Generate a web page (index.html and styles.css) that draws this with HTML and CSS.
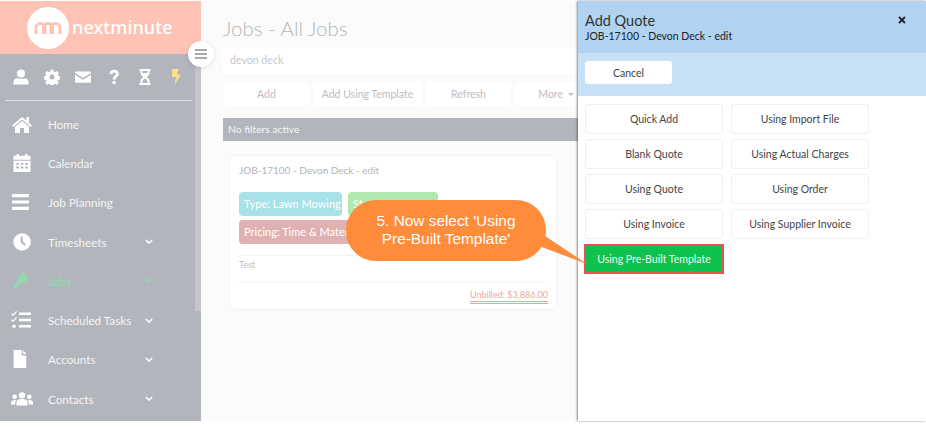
FILE: index.html
```html
<!DOCTYPE html>
<html lang="en">
<head>
<meta charset="utf-8">
<title>Jobs - All Jobs</title>
<link rel="stylesheet" href="styles.css">
</head>
<body>
<div class="app">
  <aside class="sidebar">
    <div class="brand">
      <div class="logo-circle">
        <svg width="28" height="14" viewBox="0 0 28 14"><path d="M2 13V7a4.500 4.500 0 0 1 9 0v6M9.500 13V7a4.500 4.500 0 0 1 9 0v6M17 13V7a4.500 4.500 0 0 1 9 0v6" fill="none" stroke="#fec3b5" stroke-width="3"/></svg>
      </div>
      <span class="brand-name">nextminute</span>
    </div>
    <div class="side-body">
      <div class="side-inner">
        <div class="quick-icons">
          <svg class="qi" viewBox="0 0 16 16"><circle cx="8" cy="4.500" r="4"/><path d="M0.500 15.500v-2.500c0-2.500 2-3.500 4-3.800 1 .8 6 .8 7 0 2 .3 4 1.300 4 3.800v2.500z"/></svg>
          <svg class="qi" viewBox="0 0 16 16"><path fill-rule="evenodd" d="M6.500 1h3l.4 2 1.200.5 1.700-1.100 2.100 2.100-1.100 1.700.5 1.200 2 .4v3l-2 .4-.5 1.200 1.100 1.700-2.100 2.100-1.700-1.100-1.200.5-.4 2h-3l-.4-2-1.200-.5-1.700 1.100-2.100-2.100 1.100-1.700-.5-1.200-2-.4v-3l2-.4.500-1.200-1.100-1.700 2.100-2.100 1.700 1.100 1.200-.5zM8 5.800a2.500 2.500 0 1 0 0 5 2.500 2.500 0 0 0 0-5z" transform="translate(0 -.3)"/></svg>
          <svg class="qi" viewBox="0 0 16 16"><path d="M0 3.500q0-1 1-1h14q1 0 1 1v.5l-8 5-8-5zM0 5.700l8 5 8-5v7q0 1-1 1H1q-1 0-1-1z"/></svg>
          <svg class="qi" viewBox="0 0 16 16"><path d="M3.500 5C3.800 2 5.700.800 8.200.800c2.700 0 4.600 1.600 4.600 4 0 3.200-3.200 3.200-3.200 5.700H6.700c0-3.700 3-3.700 3-5.600 0-1-.7-1.500-1.600-1.500-1 0-1.600.6-1.800 1.900zM6.600 12h3v3h-3z"/></svg>
          <svg class="qi" viewBox="0 0 16 16"><path fill-rule="evenodd" d="M2.500 0h11v2h-1v2.500C12.500 6.500 10 7 10 8s2.500 1.500 2.500 3.500V14h1v2h-11v-2h1v-2.500C3.500 9.500 6 9 6 8S3.500 6.500 3.500 4.500V2h-1zM5.500 2v2h5V2zM8 9.500c-.8.800-2.500 1.700-2.500 3V14h5v-1.500c0-1.300-1.700-2.200-2.500-3z"/></svg>
          <svg class="qi bolt" viewBox="0 0 16 16"><path d="M4 0h6.500L9 5.500h4L6.500 16 8 8H4z"/></svg>
        </div>
        <div class="side-rule"></div>
        <nav class="nav">
          <a class="nav-item"><svg class="ni" viewBox="0 0 22 18"><path d="M11 2 1 10.500l1.300 1.400L11 4.600l8.700 7.300 1.300-1.400-3-2.500V2h-2.500v3.800z"/><path d="M11 6 4 11.800V18h5v-5h4v5h5v-6.200z"/></svg><span>Home</span></a>
          <a class="nav-item"><svg class="ni" viewBox="0 0 22 20"><path fill-rule="evenodd" d="M5 0h2.500v2h7V0H17v2h2.500q1 0 1 1v3.500h-19V3q0-1 1-1H5zM1.500 7.500h19V19q0 1-1 1h-17q-1 0-1-1zM4.500 10v2h3v-2zm5 0v2h3v-2zm5 0v2h3v-2zm-10 4v2h3v-2zm5 0v2h3v-2zm5 0v2h3v-2z"/></svg><span>Calendar</span></a>
          <a class="nav-item"><svg class="ni" viewBox="0 0 22 18"><path d="M1 1h17v3.200H1zM1 7.400h17v3.200H1zM1 13.800h17V17H1z"/></svg><span>Job Planning</span></a>
          <a class="nav-item has-sub"><svg class="ni" viewBox="0 0 22 20"><path fill-rule="evenodd" d="M11 1.500a8.500 8.500 0 1 1 0 17 8.500 8.500 0 0 1 0-17zM9.800 5v5.700l3.800 3 1.200-1.500-3-2.300V5z" transform="translate(-1.500 -1.500) scale(1.140)"/></svg><span>Timesheets</span><svg class="chev" viewBox="0 0 10 6"><path d="M1 1l4 4 4-4"/></svg></a>
          <a class="nav-item has-sub active"><svg class="ni" viewBox="0 0 22 20"><path d="M1 16.500 8 9.500 6.500 6 12 .5 18.500 7 13 12.500 10.500 11.500 3.500 18.500z"/></svg><span>Jobs</span><svg class="chev" viewBox="0 0 10 6"><path d="M1 1l4 4 4-4"/></svg></a>
          <a class="nav-item has-sub"><svg class="ni" viewBox="0 0 22 18"><path d="M8 1.500h12v2.400H8zM8 7.800h12v2.400H8zM8 14h12v2.400H8zM1 2.200l1.300 1.200L5 0l1 .8L2.400 5 0 3.200zM1 8.200l1.300 1.200L5 6l1 .8L2.400 11 0 9.200z"/><circle cx="3" cy="15.200" r="1.800"/></svg><span>Scheduled Tasks</span><svg class="chev" viewBox="0 0 10 6"><path d="M1 1l4 4 4-4"/></svg></a>
          <a class="nav-item has-sub"><svg class="ni" viewBox="0 0 22 20"><path d="M3 0h9v6h5v13.300q0 .7-.7.700H3.700q-.7 0-.7-.7zM13.500 0 17 4.500h-3.500z" transform="translate(-1.300 0)"/></svg><span>Accounts</span><svg class="chev" viewBox="0 0 10 6"><path d="M1 1l4 4 4-4"/></svg></a>
          <a class="nav-item has-sub"><svg class="ni wide" viewBox="0 0 24 16"><circle cx="12" cy="4" r="3.500"/><circle cx="4" cy="5.500" r="2.500"/><circle cx="20" cy="5.500" r="2.500"/><path d="M6 15v-3c0-3 2.500-4 6-4s6 1 6 4v3zM0 14v-2c0-2 1.500-3 4-3 .8 0 1.300.1 1.700.3C5 10 4.500 11 4.500 12v2zM24 14v-2c0-2-1.500-3-4-3-.8 0-1.300.1-1.700.3.700.7 1.200 1.700 1.200 2.700v2z"/></svg><span>Contacts</span><svg class="chev" viewBox="0 0 10 6"><path d="M1 1l4 4 4-4"/></svg></a>
        </nav>
      </div>
      <div class="side-track"><div class="side-thumb"></div></div>
    </div>
    <button class="collapse"><svg width="12" height="10" viewBox="0 0 12 10"><path d="M0 0h12v2H0zM0 4h12v2H0zM0 8h12v2H0z" fill="#a9a9a9"/></svg></button>
  </aside>

  <main class="main">
    <h1 class="page-title">Jobs - All Jobs</h1>
    <div class="search">devon deck</div>
    <div class="actions">
      <div class="act act-add">Add</div>
      <div class="act act-tpl">Add Using Template</div>
      <div class="act act-ref">Refresh</div>
      <div class="act act-more">More <i class="caret"></i></div>
    </div>
    <div class="filters">No filters active</div>
    <article class="card">
      <div class="card-title">JOB-17100 - Devon Deck - edit</div>
      <div class="tags">
        <span class="tag tag-type">Type: Lawn Mowing</span>
        <span class="tag tag-status">Status: In Progress</span>
        <span class="tag tag-pricing">Pricing: Time &amp; Materials</span>
      </div>
      <div class="card-note">Test</div>
      <div class="card-foot"><span class="unbilled">Unbilled: $3,886.00</span></div>
    </article>
  </main>

  <section class="drawer">
    <header class="drawer-head">
      <div>
        <div class="drawer-title">Add Quote</div>
        <div class="drawer-sub">JOB-17100 - Devon Deck - edit</div>
      </div>
      <svg class="close" width="8" height="8" viewBox="0 0 8 8"><path d="M1 1l6 6M7 1L1 7" stroke="#222" stroke-width="1.800"/></svg>
    </header>
    <div class="drawer-tools"><button class="cancel">Cancel</button></div>
    <div class="options">
      <button class="opt">Quick Add</button>
      <button class="opt">Using Import File</button>
      <button class="opt">Blank Quote</button>
      <button class="opt">Using Actual Charges</button>
      <button class="opt">Using Quote</button>
      <button class="opt">Using Order</button>
      <button class="opt">Using Invoice</button>
      <button class="opt">Using Supplier Invoice</button>
      <button class="opt opt-go">Using Pre-Built Template</button>
    </div>
  </section>

  <div class="callout">
    <svg class="callout-tail" width="60" height="50" viewBox="0 0 60 50"><path d="M0 11 48 43 0 25z" fill="#ff8c3a" transform="translate(0 -1)"/></svg>
    <div class="callout-text">5. Now select 'Using<br>Pre-Built Template'</div>
  </div>
</div>
</body>
</html>
```
FILE: styles.css
```css
* { box-sizing: border-box; }
html, body { margin: 0; height: 100%; background: #fff; overflow: hidden; }
body { padding-top: 1px; font-family: Lato, "Open Sans", sans-serif; }
.app { position: relative; display: flex; height: 420px; background: #fbfbfb; }

.sidebar { position: relative; flex: 0 0 201px; display: flex; flex-direction: column; background: #b2b6bc; }
.brand { flex: 0 0 53px; display: flex; align-items: center; padding-left: 27px; gap: 3px; background: #fec3b5; }
.logo-circle { width: 42px; height: 42px; border-radius: 50%; background: #fff; display: flex; align-items: center; justify-content: center; }
.brand-name { color: #fff; font: 500 18px "Noto Sans", sans-serif; letter-spacing: .1px; margin-top: -2px; }
.side-body { flex: 1; display: flex; min-height: 0; }
.side-inner { flex: 1; min-width: 0; }
.side-track { flex: 0 0 6px; }
.side-thumb { height: 257px; background: #c5c6c8; }
.quick-icons { display: flex; justify-content: space-between; align-items: center; height: 46px; padding: 0 11px 0 13px; }
.qi { width: 16px; height: 16px; fill: #fff; }
.bolt { fill: #fbe08c; }
.side-rule { height: 1px; margin: 0 0 0 5px; width: 187px; background: #dcdee0; }
.nav { padding-top: 3px; }
.nav-item { display: flex; align-items: center; height: 39.300px; color: #f4f4f5; font-size: 11.700px; padding-left: 11px; }
.ni { width: 22px; height: 18px; fill: #fff; margin-right: 15px; flex: none; }
.nav-item span { flex: none; width: 97px; }
.chev { width: 8px; height: 5px; fill: none; stroke: #fff; stroke-width: 1.800px; }
.active { color: #8fdcaa; }
.active .ni { fill: #8fdcaa; }
.active .chev { stroke: #8fdcaa; }
.collapse { position: absolute; right: -13px; top: 40px; width: 26px; height: 26px; padding: 0; border: 0; border-radius: 50%; background: #fff; box-shadow: 0 1px 4px rgba(0,0,0,.12); display: flex; align-items: center; justify-content: center; }

.main { flex: 1; min-width: 0; padding-left: 22px; overflow: hidden; }
.page-title { margin: 14px 0 0; height: 32px; font-size: 20.500px; line-height: 27px; font-weight: 300; color: #b4b5b6; }
.search { height: 27px; margin-right: -5px; padding-left: 7px; border-radius: 4px; background: #fff; color: #c5c7cb; font-size: 10.600px; line-height: 27px; }
.actions { display: flex; gap: 4px; margin: 8px -20px 0 1px; }
.act { height: 24px; border-radius: 3px; background: #fff; color: #bcbdbf; font-size: 10.500px; line-height: 24px; text-align: center; }
.act-add { flex: 0 0 85px; }
.act-tpl { flex: 0 0 109px; }
.act-ref { flex: 0 0 85px; }
.act-more { flex: 0 0 85px; padding-right: 3px; }
.caret { display: inline-block; margin-left: 2px; vertical-align: 2px; border: 3px solid transparent; border-top-color: #c0c0c0; border-bottom: 0; }
.filters { height: 23px; margin-top: 12px; padding-left: 5px; background: #b2b6bc; color: #f6f6f7; font-size: 10.300px; line-height: 23px; }
.card { width: 326px; height: 153px; margin: 15px 0 0 7px; padding: 8px 8px 0 9px; border-radius: 5px; background: #fff; box-shadow: 0 0 3px rgba(0,0,0,.06); }
.card-title { color: #b2b3b5; font-size: 10px; line-height: 13px; }
.tags { display: flex; flex-wrap: wrap; gap: 4px 6px; margin-top: 15px; width: 240px; }
.tag { height: 24px; padding: 0 5px; border-radius: 4px; color: #fff; font-size: 11px; line-height: 24px; white-space: nowrap; }
.tag-type { background: #a8e2e8; width: 103px; }
.tag-status { background: #afe9ad; width: 90px; }
.tag-pricing { background: #dfb1b3; width: 140px; }
.card-note { margin-top: 11px; padding-top: 3px; border-top: 1px solid #f3f3f3; height: 27px; color: #c0c0c0; font-size: 9px; line-height: 12px; }
.card-foot { border-top: 1px solid #f6f6f6; padding-top: 6px; text-align: right; font-size: 9px; line-height: 12px; }
.unbilled { color: #f2a5a1; line-height: 12px; border-bottom: 3px double #f4a09c; display: inline-block; vertical-align: top; }

.drawer { flex: 0 0 348px; background: #fff; box-shadow: -1px 0 2px rgba(0,0,0,.45); z-index: 1; }
.drawer-head { height: 52px; padding: 12px 20px 0 7px; display: flex; justify-content: space-between; align-items: flex-start; background: #afd3f1; color: #222; }
.drawer-title { font-size: 14.500px; line-height: 16px; font-weight: 400; color: #333; }
.drawer-sub { font-size: 10.500px; line-height: 15px; color: #222; }
.close { margin-top: 3px; }
.drawer-tools { height: 43px; padding: 8px 7px 0; background: #c9e1f6; }
.cancel { display: block; width: 87px; height: 23px; padding: 0; border: 0; border-radius: 3px; background: #fff; color: #444; font: 10.500px Lato, "Open Sans", sans-serif; }
.options { display: grid; grid-template-columns: 138px 138px; gap: 5px 8px; padding: 8px 7px; justify-content: start; }
.opt { height: 30px; padding: 0; border: 1px solid #efefef; border-radius: 3px; background: #fff; color: #444; font: 10.500px Lato, "Open Sans", sans-serif; }
.opt-go { margin: 0 -1px; width: 140px; border: 2px solid #e8534f; border-radius: 0; background: #0fc24f; color: #e9fbef; }

.callout { position: absolute; left: 346px; top: 199px; z-index: 2; width: 200px; height: 61px; padding-bottom: 2px; border-radius: 30px; background: #ff8c3a; color: #fff; display: flex; align-items: center; justify-content: center; text-align: center; }
.callout-tail { position: absolute; left: 193px; top: 22px; }
.callout-text { position: relative; font: 15.400px/18px "Liberation Sans", Arial, sans-serif; }
```
